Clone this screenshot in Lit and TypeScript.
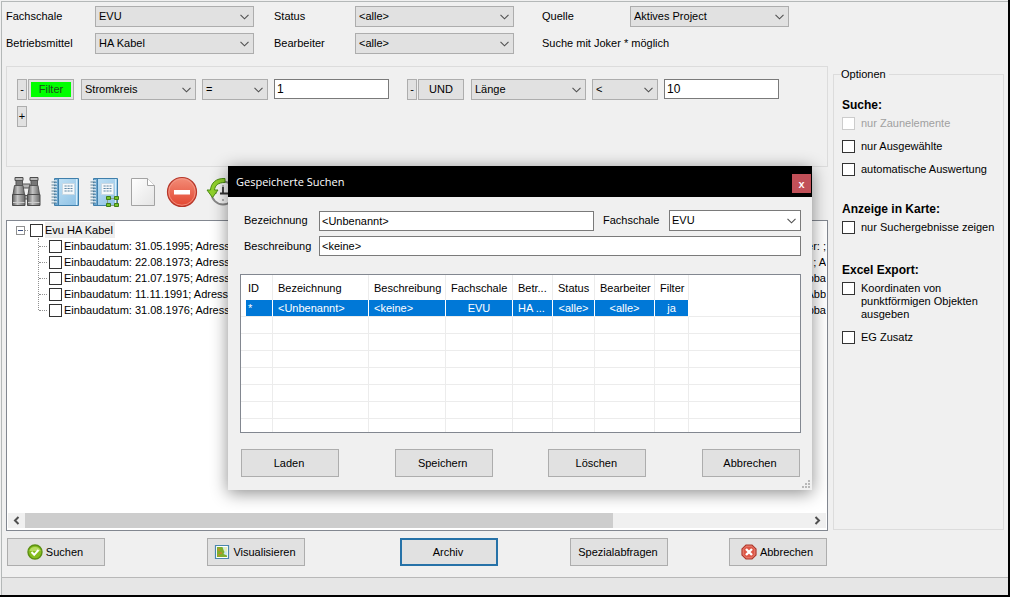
import { LitElement, html, css, svg } from "lit";
import { customElement } from "lit/decorators.js";
import { classMap } from "lit/directives/class-map.js";

const ROWS = [
  { start: "Einbaudatum: 31.05.1995; Adresse:", end: "Bearbeiter: ;" },
  { start: "Einbaudatum: 22.08.1973; Adresse:", end: "; A" },
  { start: "Einbaudatum: 21.07.1975; Adresse:", end: "Abba" },
  { start: "Einbaudatum: 11.11.1991; Adresse:", end: "Abb" },
  { start: "Einbaudatum: 31.08.1976; Adresse:", end: "Abba" },
];

const COLUMNS = [
  { name: "ID", value: "*", cls: "c-id" },
  { name: "Bezeichnung", value: "<Unbenannt>", cls: "c-name" },
  { name: "Beschreibung", value: "<keine>", cls: "c-desc" },
  { name: "Fachschale", value: "EVU", cls: "c-fach", center: true },
  { name: "Betr...", value: "HA ...", cls: "c-betr" },
  { name: "Status", value: "<alle>", cls: "c-stat", center: true },
  { name: "Bearbeiter", value: "<alle>", cls: "c-bearb", center: true },
  { name: "Filter", value: "ja", cls: "c-filter", center: true },
];

const barrel = (x: number) => svg`
  <path d="M${x + 3} 1.5h8v3h-8z" fill="#b9b9b9" stroke="#4c4c4c"/>
  <path d="M${x + 4} 4.5h6.5v5h-6.5z" fill="#777" stroke="#555"/>
  <path d="M${x + 2.5} 9.5h8.5l1.5 9h-11.5z" fill="url(#steel)" stroke="#555"/>
  <path d="M${x + 0.5} 18.5h12.5v11h-12.5z" fill="url(#steel)" stroke="#4c4c4c"/>
  <path d="M${x + 1} 26.5h11.500" stroke="#ccc"/>`;

const binoculars = html`<svg viewBox="0 0 32 32">
  <defs><linearGradient id="steel"><stop offset="0" stop-color="#5e5e5e"/><stop offset=".4" stop-color="#c4c4c4"/><stop offset="1" stop-color="#696969"/></linearGradient></defs>
  <path d="M12 8h8v4h-8zM12 19.500h8v3.500h-8z" fill="#b5b5b5" stroke="#555"/>
  ${barrel(2)}${barrel(17)}
</svg>`;

const notebook = (marks: boolean) => html`<svg viewBox="0 0 32 32">
  <defs><linearGradient id="cover" x2="1" y2="1"><stop offset="0" stop-color="#c4e3f6"/><stop offset="1" stop-color="#8cc0e4"/></linearGradient></defs>
  <path d="M5.500 2.500h24v27h-24z" fill="url(#cover)" stroke="#3f7fab"/>
  <path d="M6 3h3v26H6z" fill="#6ba6d0"/>
  <path d="M9.500 3v26" stroke="#4482ad"/>
  <path d="M27.500 3v26" stroke="#d8effb"/>
  <path d="M3 5h5M3 8h5M3 11h5M3 14h5M3 17h5M3 20h5M3 23h5M3 26h5" stroke="#e9f2f8" stroke-width="1.500"/>
  <path d="M2.500 6h5M2.500 9h5M2.500 12h5M2.500 15h5M2.500 18h5M2.500 21h5M2.500 24h5M2.500 27h5" stroke="#56788f" stroke-width=".9"/>
  <path d="M13.500 7.500h12v11h-12z" fill="#f5f8fa" stroke="#c9d9e4"/>
  <path d="M15.500 10h8M15.500 12.500h8M15.500 15h8" stroke="#5e87a5" stroke-dasharray="2.200 .8"/>
  ${marks
    ? svg`<path d="M20 22.500h8M20 29.500h8M19.500 22v8M28.500 22v8" stroke="#8aa08a"/>
      <path d="M18.500 20.500h4v3h-4zM26.500 20.500h4v3h-4zM18.500 27.500h4v3h-4zM26.500 27.500h4v3h-4z" fill="#78c62a" stroke="#3f7d16"/>`
    : ""}
</svg>`;

const page = html`<svg viewBox="0 0 32 32">
  <defs><linearGradient id="sheet" x2="1" y2="1"><stop offset="0" stop-color="#fff"/><stop offset="1" stop-color="#e4e4e4"/></linearGradient></defs>
  <path d="M4.500 2.500h16l7 7v20h-23z" fill="url(#sheet)" stroke="#a3a3a3"/>
  <path d="M20.500 2.500v7h7" fill="#fff" stroke="#a3a3a3"/>
</svg>`;

const noEntry = html`<svg viewBox="0 0 32 32">
  <defs><linearGradient id="red" x2="0" y2="1"><stop offset="0" stop-color="#f38d78"/><stop offset="1" stop-color="#e2452f"/></linearGradient></defs>
  <circle cx="16" cy="16" r="14.500" fill="url(#red)" stroke="#b5372a" stroke-width="1.200"/>
  <circle cx="16" cy="16" r="13.200" fill="none" stroke="#f39b8b" stroke-width=".8"/>
  <path d="M8 14h16v4.500H8z" fill="#fff"/>
</svg>`;

const history = html`<svg viewBox="0 0 32 32">
  <circle cx="18" cy="17" r="11.500" fill="#f7f7f7" stroke="#888" stroke-width="2"/>
  <path d="M18 9v2M18 23v2M10 17h2" stroke="#777"/>
  <path d="M18 11v6.500h6M15 17.500h3" fill="none" stroke="#333" stroke-width="1.800"/>
  <path d="M20 2.500C11 2 6 7 5.500 14H2l5.500 7.500L13 14H9.500C10 9.500 13 6.500 20 6.500z" fill="#8fd02c" stroke="#4b8a14"/>
</svg>`;

const okIcon = html`<svg class="small" viewBox="0 0 16 16">
  <circle cx="8" cy="8" r="7" fill="#86bd1f" stroke="#5c8f12" stroke-width="1.400"/>
  <path d="M2.500 7a5.600 5 0 0 1 11 0z" fill="#b6dc62"/>
  <path d="M4.500 8l2.700 2.800L11.500 6" fill="none" stroke="#fff" stroke-width="2"/>
</svg>`;

const mapIcon = html`<svg class="small" viewBox="0 0 16 16">
  <path d="M1.500 1.500h13v13h-13z" fill="#fff" stroke="#4a86ae" stroke-width="1.200"/>
  <path d="M3 3h10v10H3z" fill="#c9e8ee"/>
  <path d="M3 3h5.500l1 3 1 2-1 2 3.500 1.500V13H3z" fill="#7fae2c"/>
  <path d="M4 4l2 1v2H4zM6 8h2v2H6zM4 10h2v2H4z" fill="#b98f2a"/>
  <path d="M10 3h3v5l-2.500-1z" fill="#e6efb8"/>
</svg>`;

const cancelIcon = html`<svg class="small" viewBox="0 0 16 16">
  <path d="M5 1h6l4 4v6l-4 4H5l-4-4V5z" fill="#dd5747" stroke="#ac392d" stroke-width="1.200"/>
  <path d="M5.200 2.200h5.600l3 3v5.600l-3 3H5.200l-3-3V5.200z" fill="none" stroke="#ee9488" stroke-width=".7"/>
  <path d="M5 5l6 6M11 5l-6 6" stroke="#fff" stroke-width="2.400"/>
</svg>`;

const controls = css`
  * { box-sizing: border-box; }
  button, select, input { font: inherit; color: inherit; margin: 0; border-radius: 0; }
  button {
    display: inline-flex; align-items: center; justify-content: center;
    border: 1px solid #adadad; background: #e1e1e1; padding: 0; white-space: nowrap;
  }
  .action { width: 98px; height: 28px; gap: 3px; padding-right: 2px; }
  select {
    appearance: none; height: 21px; width: 100%; min-width: 0; padding: 0 16px 0 3px;
    border: 1px solid #adadad;
    background: #e1e1e1 url("data:image/svg+xml,%3Csvg xmlns='http://www.w3.org/2000/svg' width='9' height='6'%3E%3Cpath d='M.5.8l4 4 4-4' fill='none' stroke='%23505050' stroke-width='1.100'/%3E%3C/svg%3E") no-repeat right 4px center;
  }
  .text {
    height: 20px; width: 100%; min-width: 0; padding: 0 2px;
    border: 1px solid #7a7a7a; background: #fff; outline: none;
  }
  .small { width: 16px; height: 16px; flex: none; }
`;

@customElement("search-dialog")
class SearchDialog extends LitElement {
  static styles = [
    controls,
    css`
      :host { display: block; background: #f0f0f0; box-shadow: 0 3px 16px rgba(0, 0, 0, 0.45); }
      .title {
        display: flex; justify-content: space-between; height: 31px; padding: 0 1px 0 8px;
        background: #000; color: #fff; font-family: "Open Sans", sans-serif; line-height: 31px;
      }
      .close { width: 19px; height: 19px; margin-top: 8px; border: 0; background: #c15058; color: #fff; font-weight: 600; line-height: 19px; }
      .body { padding: 13px 11px 13px 12px; }
      .form { display: grid; grid-template-columns: 75px 1fr 75px 132px; row-gap: 5px; align-items: center; padding-left: 4px; }
      .form .second { padding-left: 9px; }
      .form select { background-color: #fff; border-color: #7a7a7a; padding-left: 2px; }
      .wide { grid-column: 2 / -1; }
      .list { margin-top: 18px; height: 159px; border: 1px solid #828790; background: #fff; overflow: hidden; }
      table { width: 100%; table-layout: fixed; border-collapse: separate; border-spacing: 0; }
      th, td { padding: 0 0 0 5px; font-weight: 400; text-align: left; white-space: nowrap; border-right: 1px solid #ececec; overflow: hidden; }
      th:last-child, td:last-child { border-right: 0; }
      th:first-child, td:first-child { padding-left: 7px; }
      th { height: 25px; padding-top: 2px; }
      td { height: 17px; border-bottom: 1px solid #ececec; line-height: 16px; }
      .sel td { background: #0078d7; color: #fff; border-right-color: #fff; }
      .sel td:first-child { background: linear-gradient(90deg, #fff 5px, #0078d7 5px); }
      .sel td:last-child { background: #fff; }
      .center { text-align: center; padding-right: 5px; }
      .c-id { width: 32px; } .c-name { width: 96px; } .c-desc { width: 77px; } .c-fach { width: 67px; }
      .c-betr { width: 40px; } .c-stat { width: 42px; } .c-bearb { width: 60px; } .c-filter { width: 34px; }
      .buttons { display: flex; justify-content: space-between; padding: 16px 1px 0; }
      .grip { position: absolute; right: 1px; bottom: 1px; width: 9px; height: 9px; fill: #b8b8b8; }
    `,
  ];

  render() {
    return html`
      <header class="title"><span>Gespeicherte Suchen</span><button class="close" aria-label="Schließen">x</button></header>
      <div class="body">
        <div class="form">
          <label for="name">Bezeichnung</label>
          <input id="name" class="text" .value=${"<Unbenannt>"} />
          <label for="fach" class="second">Fachschale</label>
          <select id="fach"><option>EVU</option></select>
          <label for="desc">Beschreibung</label>
          <input id="desc" class="text wide" .value=${"<keine>"} />
        </div>
        <div class="list">
          <table>
            <thead><tr>${COLUMNS.map((c) => html`<th class=${c.cls}>${c.name}</th>`)}<th></th></tr></thead>
            <tbody>
              <tr class="sel">${COLUMNS.map((c) => html`<td class=${classMap({ center: !!c.center })}>${c.value}</td>`)}<td></td></tr>
              ${[1, 2, 3, 4, 5, 6, 7].map(() => html`<tr>${COLUMNS.map(() => html`<td></td>`)}<td></td></tr>`)}
            </tbody>
          </table>
        </div>
        <div class="buttons">
          ${["Laden", "Speichern", "Löschen", "Abbrechen"].map((t) => html`<button class="action">${t}</button>`)}
        </div>
      </div>
      <svg class="grip" viewBox="0 0 9 9"><path d="M6 0h2v2H6zM3 3h2v2H3zM6 3h2v2H6zM0 6h2v2H0zM3 6h2v2H3zM6 6h2v2H6z"/></svg>
    `;
  }
}

@customElement("app-root")
class AppRoot extends LitElement {
  static styles = [
    controls,
    css`
      :host {
        display: flex; flex-direction: column; position: relative; min-height: 100vh;
        font: 11px/13px "Liberation Sans", Arial, sans-serif; color: #000; background: #f0f0f0;
        border: solid #000; border-width: 0 2px 2px 0; box-sizing: border-box;
      }
      .frame { flex: 1; display: flex; flex-direction: column; margin: 1px 0 0 1px; border: solid #b4b8b8; border-width: 1px 0 0 1px; }
      .query { display: grid; grid-template-columns: 89px 159px 101px 159px 116px 159px; row-gap: 6px; align-items: center; padding: 4px 0 0 4px; }
      .second { padding-left: 20px; }
      .third { padding-left: 28px; }
      .hint { grid-column: 5 / -1; }
      .main { flex: 1; display: grid; grid-template-columns: minmax(0, 1fr) 171px; column-gap: 5px; padding: 12px 4px 0; }
      .left { display: flex; flex-direction: column; }
      .filters { height: 101px; border: 1px solid #dcdcdc; padding: 12px 10px; }
      .cond { display: flex; height: 21px; }
      .step { width: 10px; height: 21px; margin-right: 1px; }
      .op { width: 46px; height: 21px; margin-right: 7px; }
      .on { background: #0f0; box-shadow: inset 0 0 0 2px #e1e1e1; color: #1d4a1d; }
      .field { width: 115px; margin-right: 6px; }
      .cmp { width: 66px; margin-right: 6px; }
      .value { width: 115px; margin-right: 18px; font-size: 12px; }
      .more { display: flex; margin-top: 6px; }
      .tools { display: flex; gap: 7px; padding: 9px 4px 12px; }
      .tool { width: 32px; height: 32px; border: 0; background: none; }
      .tool svg { width: 32px; height: 32px; }
      .tree { flex: 1; display: flex; flex-direction: column; border: 1px solid #828790; background: #fff; padding: 1px; min-height: 311px; }
      .items { flex: 1; list-style: none; margin: 0; padding: 0 0 0 8px; overflow: hidden; }
      .items ul { list-style: none; margin: 0; padding: 0; }
      .node { display: flex; align-items: center; height: 16px; white-space: nowrap; gap: 2px; }
      .node input { flex: none; }
      .child { padding-left: 23px; }
      .child .dots { width: 8px; border-top: 1px dotted #909090; }
      .branch { position: relative; }
      .branch::before { content: ""; position: absolute; left: 22px; top: 0; height: 72px; border-left: 1px dotted #909090; }
      .root .dots { width: 3px; margin-left: -2px; border-top: 1px dotted #909090; }
      .root .label { background: #eee; line-height: 16px; padding-right: 2px; }
      .expander { width: 9px; height: 9px; border-color: #909090; background: #fff; line-height: 7px; }
      .expander::before { content: ""; width: 5px; border-top: 1px solid #3b4f81; }
      .tail { margin-left: auto; }
      input[type="checkbox"] { appearance: none; width: 13px; height: 13px; border: 1px solid #333; background: #fff; flex: none; }
      input[type="checkbox"]:disabled { border-color: #ccc; }
      .scroll { display: flex; height: 15px; background: #f0f0f0; margin-bottom: 1px; }
      .arrow { width: 17px; height: 15px; border: 0; background: none; }
      .arrow svg { width: 7px; height: 9px; fill: none; stroke: #505050; stroke-width: 2; }
      .track { flex: 1; }
      .thumb { width: 75%; height: 15px; background: #cdcdcd; }
      .options { border: 1px solid #dcdcdc; margin: 2px 0 1px; padding: 11px 6px 0 8px; min-width: 0; }
      .options legend { padding: 0 3px 0 0; margin-left: -1px; }
      .options h3 { font-size: 12px; line-height: 13px; margin: 0; padding-top: 7px; }
      .check { display: flex; gap: 6px; margin: 5px 0 10px; align-items: flex-start; }
      .group { padding-bottom: 10px; }
      .group + .group { padding-bottom: 13px; }
      .off { color: #a0a0a0; }
      .bar { display: grid; grid-template-columns: 200px 193px 170px 159px 98px; padding: 7px 0 11px 5px; }
      .primary { border: 2px solid #2672a8; }
      .status { height: 18px; border-top: 1px solid #b8b8b8; background: #e6e6e6; }
      search-dialog { position: absolute; left: 228px; top: 166px; width: 584px; }
    `,
  ];

  private select(id: string, value: string, cls = "") {
    return html`<select id=${id} class=${cls} aria-label=${id}><option>${value}</option></select>`;
  }

  private condition(n: number, op: string, field: string, cmp: string, value: string) {
    return html`
      <button class="step" aria-label="Bedingung entfernen">-</button>
      <button class=${classMap({ op: true, on: op === "Filter" })}>${op}</button>
      ${this.select(`feld${n}`, field, "field")} ${this.select(`vergleich${n}`, cmp, "cmp")}
      <input class="text value" aria-label="Wert" .value=${value} />`;
  }

  private check(label: string, disabled = false) {
    return html`<label class=${classMap({ check: true, off: disabled })}><input type="checkbox" ?disabled=${disabled} /><span>${label}</span></label>`;
  }

  render() {
    return html`
      <div class="frame">
        <div class="query">
          <label for="Fachschale">Fachschale</label>${this.select("Fachschale", "EVU")}
          <label class="second" for="Status">Status</label>${this.select("Status", "<alle>")}
          <label class="third" for="Quelle">Quelle</label>${this.select("Quelle", "Aktives Project")}
          <label for="Betriebsmittel">Betriebsmittel</label>${this.select("Betriebsmittel", "HA Kabel")}
          <label class="second" for="Bearbeiter">Bearbeiter</label>${this.select("Bearbeiter", "<alle>")}
          <span class="third hint">Suche mit Joker * möglich</span>
        </div>
        <div class="main">
          <div class="left">
            <div class="filters">
              <div class="cond">
                ${this.condition(1, "Filter", "Stromkreis", "=", "1")}
                ${this.condition(2, "UND", "Länge", "<", "10")}
              </div>
              <div class="more"><button class="step">+</button></div>
            </div>
            <div class="tools">
              ${[binoculars, notebook(false), notebook(true), page, noEntry, history].map(
                (icon) => html`<button class="tool">${icon}</button>`
              )}
            </div>
            <div class="tree">
              <ul class="items">
                <li>
                  <div class="node root">
                    <button class="expander" aria-label="Zuklappen"></button><span class="dots"></span>
                    <input type="checkbox" id="all" /><label class="label" for="all">Evu HA Kabel</label>
                  </div>
                  <ul class="branch">
                    ${ROWS.map(
                      (r, i) => html`<li class="node child"><span class="dots"></span><input type="checkbox" id="row${i}" /><label for="row${i}">${r.start}</label><span class="tail">${r.end}</span></li>`
                    )}
                  </ul>
                </li>
              </ul>
              <div class="scroll">
                <button class="arrow" aria-label="Nach links"><svg viewBox="0 0 7 9"><path d="M5.500 1L2 4.500 5.500 8"/></svg></button>
                <div class="track"><div class="thumb"></div></div>
                <button class="arrow" aria-label="Nach rechts"><svg viewBox="0 0 7 9"><path d="M1.500 1L5 4.500 1.500 8"/></svg></button>
              </div>
            </div>
          </div>
          <fieldset class="options">
            <legend>Optionen</legend>
            <div class="group">
              <h3>Suche:</h3>
              ${this.check("nur Zaunelemente", true)} ${this.check("nur Ausgewählte")} ${this.check("automatische Auswertung")}
            </div>
            <div class="group">
              <h3>Anzeige in Karte:</h3>
              ${this.check("nur Suchergebnisse zeigen")}
            </div>
            <div class="group">
              <h3>Excel Export:</h3>
              ${this.check("Koordinaten von punktförmigen Objekten ausgeben")} ${this.check("EG Zusatz")}
            </div>
          </fieldset>
        </div>
        <div class="bar">
          <button class="action">${okIcon}Suchen</button>
          <button class="action">${mapIcon}Visualisieren</button>
          <button class="action primary">Archiv</button>
          <button class="action">Spezialabfragen</button>
          <button class="action">${cancelIcon}Abbrechen</button>
        </div>
        <div class="status"></div>
      </div>
      <search-dialog role="dialog" aria-label="Gespeicherte Suchen"></search-dialog>
    `;
  }
}
